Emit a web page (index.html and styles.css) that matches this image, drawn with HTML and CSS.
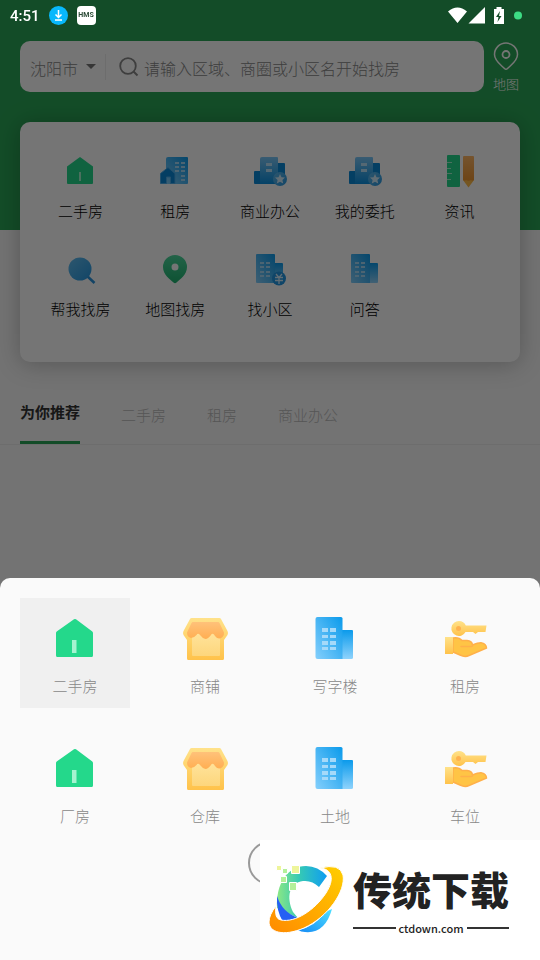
FILE: index.html
```html
<!DOCTYPE html>
<html lang="zh-CN">
<head>
<meta charset="utf-8">
<meta name="viewport" content="width=device-width, initial-scale=1">
<title>找房</title>
<link rel="stylesheet" href="styles.css">
</head>
<body>
<svg class="defs" aria-hidden="true">
  <defs>
    <linearGradient id="blue" x1="1" y1="0" x2="0" y2="1"><stop offset="0" stop-color="#0a9aeb"/><stop offset="1" stop-color="#84cffc"/></linearGradient>
    <linearGradient id="blueDown" x1="0" y1="0" x2="0" y2="1"><stop offset="0" stop-color="#0a9aeb"/><stop offset="1" stop-color="#8fd3fc"/></linearGradient>
    <linearGradient id="blueUp" x1="0" y1="0" x2="0" y2="1"><stop offset="0" stop-color="#7cc8f8"/><stop offset="1" stop-color="#0a90e0"/></linearGradient>
    <linearGradient id="blueLens" x1="0" y1="0" x2="1" y2="1"><stop offset="0" stop-color="#62bdf0"/><stop offset="1" stop-color="#2697e0"/></linearGradient>
    <linearGradient id="pinGreen" x1="0" y1="0" x2="0" y2="1"><stop offset="0" stop-color="#4cd79d"/><stop offset="1" stop-color="#1fb370"/></linearGradient>
    <linearGradient id="gold" x1="0" y1="0" x2="0" y2="1"><stop offset="0" stop-color="#ffe28a"/><stop offset="1" stop-color="#ffc24a"/></linearGradient>
    <linearGradient id="awning" x1="0" y1="0" x2="0" y2="1"><stop offset="0" stop-color="#ffc27a"/><stop offset="1" stop-color="#ffae52"/></linearGradient>
    <linearGradient id="pane" x1="0" y1="0" x2="0" y2="1"><stop offset="0" stop-color="#ffe39c"/><stop offset="1" stop-color="#fdd67c"/></linearGradient>
    <linearGradient id="pencil" x1="0" y1="0" x2="0" y2="1"><stop offset="0" stop-color="#ffb765"/><stop offset="1" stop-color="#ee9430"/></linearGradient>
    <linearGradient id="ring" x1="1" y1="0" x2="0" y2="1"><stop offset="0" stop-color="#ffce00"/><stop offset="1" stop-color="#ff8a00"/></linearGradient>
    <linearGradient id="arc" x1="0" y1="0" x2="1" y2="0"><stop offset="0" stop-color="#8ce884"/><stop offset=".45" stop-color="#35c9b5"/><stop offset="1" stop-color="#0f9df2"/></linearGradient>
    <linearGradient id="tail" x1="0" y1="1" x2="1" y2="0"><stop offset="0" stop-color="#148af5"/><stop offset="1" stop-color="#4fe0ff"/></linearGradient>

    <symbol id="house" viewBox="0 0 48 48">
      <path fill="#24d88b" d="M23 4.3Q24 3.600 25 4.300L41.300 16.500Q42 17 42 18V40.500Q42 42 40.500 42H6.500Q5 42 5 40.500V18Q5 17 5.700 16.500Z"/>
      <path fill="#a5f3d0" d="M21 25h4.500v13H21z"/>
    </symbol>
    <symbol id="shop" viewBox="0 0 48 48">
      <path fill="url(#gold)" d="M10.500 3H38.500Q39.500 3 40 4L46.500 16Q47.500 18 46.500 20L43 25V43.500Q43 45 41.500 45H7.500Q6 45 6 43.500V25L2.500 20Q1.500 18 2.500 16L9 4Q9.500 3 10.500 3Z"/>
      <path fill="url(#pane)" d="M11 17h28v23q0 1-1 1H12q-1 0-1-1z"/>
      <path fill="url(#awning)" d="M12 7H37Q38 7 38.500 8L43 17.500Q43.500 20 41.500 22Q37.500 25.500 34 21L33 19.500Q31 18 30 20Q27 24 24.500 24Q22 24 19.500 20.500L18 19Q16.500 18 15.500 20Q13 23 10 23Q6 22 6 17.500L10.500 8Q11 7 12 7Z"/>
    </symbol>
    <symbol id="tower" viewBox="0 0 48 48">
      <path fill="url(#blueDown)" d="M29 15h12q1 0 1 1v26.500q0 1.500-1.500 1.500H29z"/>
      <path fill="url(#blue)" d="M6.500 2H30q1.500 0 1.500 1.500V44h-25Q4.500 44 4.500 42V4Q4.500 2 6.500 2Z"/>
      <path fill="#a5d9f9" d="M11 13h6v4h-6zM19 13h6v4h-6zM11 20h6v3h-6zM19 20h6v3h-6zM11 26h6v4h-6zM19 26h6v4h-6zM11 32h6v3h-6zM19 32h6v3h-6z"/>
    </symbol>
    <symbol id="keyhand" viewBox="0 0 48 48">
      <path fill="url(#gold)" fill-rule="evenodd" d="M18 6a7.500 7.500 0 0 1 6.800 4.500H45.500L44.500 17H37l-2.500 2L32 17H24.500A7.500 7.500 0 1 1 18 6Z"/>
      <circle cx="17.500" cy="13.500" r="2.500" fill="#ffb14e"/>
      <path fill="#ffc445" stroke="#ffb04a" stroke-width="1.500" stroke-linejoin="round" d="M12 23Q18 22 21 25.500H26Q31 26 31.500 30Q39 27 41 28Q45 29 45.500 33L28 40.500Q24 42.500 19 40L12 37Z"/>
      <path fill="none" stroke="#ffb04a" stroke-width="1.500" stroke-linecap="round" d="M20 31.500H30Q32 31.500 31.500 29.500"/>
      <path fill="url(#gold)" d="M4 22h8v17H4z"/>
    </symbol>

    <symbol id="s-house" viewBox="0 0 40 40">
      <path fill="#24d88b" d="M20 6 33 15.500V32q0 1-1 1H8q-1 0-1-1V15.500Z"/>
      <path fill="#a5f3d0" d="M19 21h2v9h-2z"/>
    </symbol>
    <symbol id="s-rent" viewBox="0 0 40 40">
      <path fill="url(#blue)" d="M13 6H32q1 0 1 1V32q0 1-1 1H11V8q0-2 2-2Z"/>
      <path fill="#a5d9f9" d="M20 11h4v2h-4zM26 11h4v2h-4zM20 15h4v2h-4zM26 15h4v2h-4zM20 19h4v2h-4zM26 19h4v2h-4zM26 24h4v2h-4zM26 28h4v2h-4z"/>
      <path fill="#0a88d8" stroke="#4dacea" d="M5.500 22.500 13 16.500 20 22.500V32.500H15.500V26H11.500V32.500H5.500Z"/>
    </symbol>
    <symbol id="s-office" viewBox="0 0 40 40">
      <path fill="#0a8ad8" d="M5 20h7v13H5q-1 0-1-1V21q0-1 1-1ZM26 12h8q1 0 1 1v20h-9z"/>
      <path fill="url(#blueUp)" d="M12 6H27q1 0 1 1V33H10V8q0-2 2-2Z"/>
      <path fill="#b9e2fb" d="M16 12h6v3h-6zM16 18h6v3h-6z"/>
      <circle cx="30" cy="28" r="7" fill="url(#blueLens)"/>
      <path fill="#d2edfd" d="m30 23 1.500 3.200 3.500.4-2.600 2.400.8 3.500-3.200-1.800-3.200 1.800.8-3.500-2.600-2.400 3.500-.4z"/>
    </symbol>
    <symbol id="s-news" viewBox="0 0 40 40">
      <rect x="7" y="4" width="13" height="32" rx="1" fill="#24d88b"/>
      <path stroke="#a5f3d0" d="M7 11.500h5M7 17.500h4M7 22.500h5M7 28.500h4"/>
      <path fill="#ffbb48" d="M23 29h11l-5.500 7.500z"/>
      <path fill="url(#pencil)" d="M24 5h9q1 0 1 1v23q-1.500 1-3 0-2.500 1.500-5 0-1.500 1-3 0V6q0-1 1-1Z"/>
    </symbol>
    <symbol id="s-find" viewBox="0 0 40 40">
      <path stroke="#2993dc" stroke-width="2.500" d="m26 26 8.500 8"/>
      <circle cx="20" cy="20" r="11.500" fill="url(#blueLens)"/>
    </symbol>
    <symbol id="s-pin" viewBox="0 0 40 40">
      <path fill="url(#pinGreen)" fill-rule="evenodd" d="M20 6A12 12 0 0 1 32 18C32 26 25 30 21.500 33.500Q20 35 18.500 33.500C15 30 8 26 8 18A12 12 0 0 1 20 6ZM20 14.500a3.500 3.500 0 1 0 0 7 3.500 3.500 0 0 0 0-7Z"/>
    </symbol>
    <symbol id="s-tower" viewBox="0 0 40 40">
      <path fill="url(#blueDown)" d="M24 14h8q1 0 1 1v18q0 1-1 1h-8z"/>
      <path fill="url(#blue)" d="M7 5H24q1 0 1 1V34H7q-1 0-1-1V6q0-1 1-1Z"/>
      <path fill="#a5d9f9" d="M10 13h4v2h-4zM16 13h4v2h-4zM10 17h4v2h-4zM16 17h4v2h-4zM10 22h4v2h-4zM16 22h4v2h-4zM10 26h4v2h-4zM16 26h4v2h-4z"/>
    </symbol>
    <symbol id="s-estate" viewBox="0 0 40 40">
      <use href="#s-tower"/>
      <circle cx="29" cy="29.500" r="7" fill="#2296e2"/>
      <path stroke="#d2edfd" stroke-width="1.300" fill="none" d="m26 25 3 3.500 3-3.500M25 28.500h8M25 31.500h8M29 28.500V35"/>
    </symbol>
  </defs>
</svg>

<div class="status">
  <span class="time">4:51</span>
  <svg class="app-icon" viewBox="0 0 19 19" aria-hidden="true"><circle cx="9.500" cy="9.500" r="9.500" fill="#08b8fc"/><path d="M9.500 4v7M6.500 8.500l3 3 3-3M6 14h7" fill="none" stroke="#fff" stroke-width="1.500"/></svg>
  <span class="hms">HMS</span>
  <svg class="signals" viewBox="0 0 76 20" aria-hidden="true">
    <path fill="#fff" d="M0 5.500Q9.500-2.500 19 5.500L9.500 17ZM20.500 17.500 37 1v16.500ZM46 3h2.500V1h5v2H56v15H46Z"/>
    <path fill="#144d28" d="m52 5-4 6h2.500l-1 5 4-6H51z"/>
    <circle cx="70" cy="9.500" r="4" fill="#3ddc84"/>
  </svg>
</div>

<main class="page">
  <header class="hero">
    <form class="search">
      <label class="city">
        <select aria-label="城市"><option>沈阳市</option></select>
        <svg class="caret" viewBox="0 0 10 5" aria-hidden="true"><path fill="#777" d="M0 0h10L5 5z"/></svg>
      </label>
      <svg class="lens" viewBox="0 0 20 20" aria-hidden="true"><circle cx="9" cy="9" r="7.800" fill="none" stroke="#888" stroke-width="1.800"/><path d="m14.500 14.500 4 4" stroke="#888" stroke-width="2"/></svg>
      <input type="search" aria-label="搜索" placeholder="请输入区域、商圈或小区名开始找房">
    </form>
    <a class="map" href="#map">
      <svg viewBox="0 0 26 30" aria-hidden="true"><path d="M13 2A11.500 11.500 0 0 1 24.500 13.500C24.500 20 18.500 23.500 14.500 27.500Q13 29 11.500 27.500C7.500 23.500 1.500 20 1.500 13.500A11.500 11.500 0 0 1 13 2Z" fill="none" stroke="#fff" stroke-width="1.500"/><circle cx="13" cy="13.500" r="3.500" fill="none" stroke="#fff" stroke-width="1.800"/></svg>
      <span>地图</span>
    </a>
  </header>
  <nav class="card">
    <a class="entry" href="#a"><svg><use href="#s-house"/></svg>二手房</a>
    <a class="entry" href="#b"><svg><use href="#s-rent"/></svg>租房</a>
    <a class="entry" href="#c"><svg><use href="#s-office"/></svg>商业办公</a>
    <a class="entry" href="#d"><svg><use href="#s-office"/></svg>我的委托</a>
    <a class="entry" href="#e"><svg><use href="#s-news"/></svg>资讯</a>
    <a class="entry" href="#f"><svg><use href="#s-find"/></svg>帮我找房</a>
    <a class="entry" href="#g"><svg><use href="#s-pin"/></svg>地图找房</a>
    <a class="entry" href="#h"><svg><use href="#s-estate"/></svg>找小区</a>
    <a class="entry" href="#i"><svg><use href="#s-tower"/></svg>问答</a>
  </nav>
  <div class="tabs">
    <button class="tab active" type="button">为你推荐</button>
    <button class="tab" type="button">二手房</button>
    <button class="tab" type="button">租房</button>
    <button class="tab" type="button">商业办公</button>
  </div>
</main>

<div class="scrim"></div>

<section class="sheet">
  <div class="types">
    <button class="type selected" type="button"><svg><use href="#house"/></svg>二手房</button>
    <button class="type" type="button"><svg><use href="#shop"/></svg>商铺</button>
    <button class="type" type="button"><svg><use href="#tower"/></svg>写字楼</button>
    <button class="type" type="button"><svg><use href="#keyhand"/></svg>租房</button>
    <button class="type" type="button"><svg><use href="#house"/></svg>厂房</button>
    <button class="type" type="button"><svg><use href="#shop"/></svg>仓库</button>
    <button class="type" type="button"><svg><use href="#tower"/></svg>土地</button>
    <button class="type" type="button"><svg><use href="#keyhand"/></svg>车位</button>
  </div>
  <button class="close" type="button" aria-label="关闭"></button>
</section>

<aside class="brand">
  <svg class="brand-mark" viewBox="0 0 76 72" aria-hidden="true">
    <path fill="url(#arc)" d="M8 46C7 22 18 4 37 4Q49 4 58 14L50 25Q43 18 34 19C20 21 17 35 24 50L29 56Z"/>
    <path fill="#2560f4" d="M8 34Q13 50 29 56L14 60Q7 48 8 34Z"/>
    <path fill="url(#tail)" d="M29 68Q46 65 56 50L63 47Q56 72 36 70Q32 70 29 68Z"/>
    <path fill="url(#ring)" stroke="#fff" stroke-width="1" d="M51 6Q71 1 74 13C77 29 59 55 35 66C14 75 0 70 0 60Q0 53 7 44Q5 57 12 58C26 61 46 48 57 31C66 17 63 7 51 6Z"/>
    <g stroke="#fff"><path fill="#eef59b" d="M7.500 3.500h5v5h-5zM22.500 3.500h8v8h-8z"/><path fill="#b4f09a" d="M13.500 6.500h5v5h-5zM11.500 14.500h6v6h-6zM20.500 20.500h7v8h-7z"/></g>
  </svg>
  <div class="brand-text">
    <strong>传统下载</strong>
    <span class="domain">ctdown.com</span>
  </div>
</aside>
</body>
</html>
```
FILE: styles.css
```css
* { box-sizing: border-box; }

body {
  margin: 0;
  min-height: 100vh;
  background: #fafafa;
  font-family: "Noto Sans CJK SC", sans-serif;
  font-size: 15px;
  font-weight: 300;
  line-height: 20px;
}

a { color: inherit; text-decoration: none; }

button, input, select {
  margin: 0;
  padding: 0;
  border: 0;
  background: none;
  color: inherit;
  font: inherit;
}

.defs { position: absolute; width: 0; height: 0; }

.status {
  position: fixed;
  inset: 0 0 auto;
  z-index: 3;
  display: flex;
  align-items: center;
  gap: 9px;
  height: 31px;
  padding: 0 16px 0 10px;
  color: #fff;
}
.time { font: 500 15px/20px Roboto, sans-serif; }
.app-icon { width: 19px; height: 19px; }
.hms {
  width: 19px;
  border-radius: 4px;
  background: #fff;
  color: #2a4a35;
  font: 700 7px/19px Roboto, sans-serif;
  text-align: center;
}
.signals { width: 76px; height: 20px; margin-left: auto; }

.page { min-height: 100vh; background: #fafafa; }

.hero {
  display: flex;
  align-items: flex-start;
  gap: 8px;
  height: 230px;
  padding: 41px 20px 0;
  background: #2ba757;
  color: #fff;
}
.search {
  display: flex;
  flex: 1;
  align-items: center;
  height: 51px;
  border-radius: 10px;
  background: #fff;
  color: #888;
  font-size: 16px;
  line-height: 24px;
}
.city {
  display: flex;
  align-items: center;
  gap: 8px;
  height: 26px;
  padding: 0 9px 0 10px;
  border-right: 1px solid #eee;
}
.city select { width: 48px; height: 26px; padding-top: 2px; appearance: none; }
.caret { width: 10px; height: 5px; }
.lens { width: 20px; height: 20px; margin: 0 5px 0 13px; }
.search input { flex: 1; min-width: 0; height: 26px; padding-top: 2px; outline: 0; }
.search input::placeholder { color: #888; opacity: 1; }
.map {
  display: flex;
  flex-direction: column;
  align-items: center;
  width: 28px;
  font-size: 13px;
  white-space: nowrap;
}
.map svg { width: 26px; height: 30px; margin-bottom: 3px; }

.card {
  position: relative;
  display: grid;
  grid-template-columns: repeat(5, 1fr);
  row-gap: 28px;
  margin: -108px 20px 0;
  padding: 29px 13px 43px;
  border-radius: 10px;
  background: #fff;
  box-shadow: 0 2px 24px rgba(0, 0, 0, .25);
  color: #000;
}
.entry { display: flex; flex-direction: column; align-items: center; gap: 10px; }
.entry svg { width: 40px; height: 40px; }

.tabs {
  display: flex;
  gap: 41px;
  margin-top: 40px;
  padding: 0 20px;
  border-bottom: 1px solid #eee;
  color: #bbb;
}
.tab { height: 42px; padding-bottom: 16px; }
.active {
  padding-bottom: 20px;
  border-bottom: 3px solid #2ba757;
  color: #333;
  font-weight: 700;
}

.scrim { position: fixed; inset: 0; z-index: 1; background: rgba(0, 0, 0, .54); }

.sheet {
  position: fixed;
  inset: auto 0 0;
  z-index: 2;
  display: flex;
  flex-direction: column;
  align-items: center;
  gap: 3px;
  padding: 20px 20px 75px;
  border-radius: 10px 10px 0 0;
  background: #fafafa;
}
.types { display: grid; grid-template-columns: repeat(4, 1fr); gap: 20px; width: 100%; }
.type {
  display: flex;
  flex-direction: column;
  align-items: center;
  gap: 13px;
  height: 110px;
  padding-top: 17px;
  color: #888;
}
.type svg { width: 48px; height: 48px; }
.selected { background: #f0f0f0; }
.close { width: 44px; height: 44px; border: 2px solid #999; border-radius: 50%; }

.brand {
  position: fixed;
  right: 0;
  bottom: 0;
  z-index: 4;
  display: flex;
  align-items: center;
  gap: 8px;
  width: 280px;
  height: 120px;
  padding: 0 9px 4px;
  background: #fff;
  color: #222;
}
.brand-mark { width: 76px; height: 72px; }
.brand-text { display: flex; flex-direction: column; }
.brand-text strong { font-size: 39px; font-weight: 900; line-height: 60px; }
.domain {
  display: flex;
  align-items: center;
  gap: 3px;
  font: 500 11px/20px "Noto Sans CJK SC", sans-serif;
}
.domain::before, .domain::after { content: ""; flex: 1; height: 2px; background: #333; }
```
